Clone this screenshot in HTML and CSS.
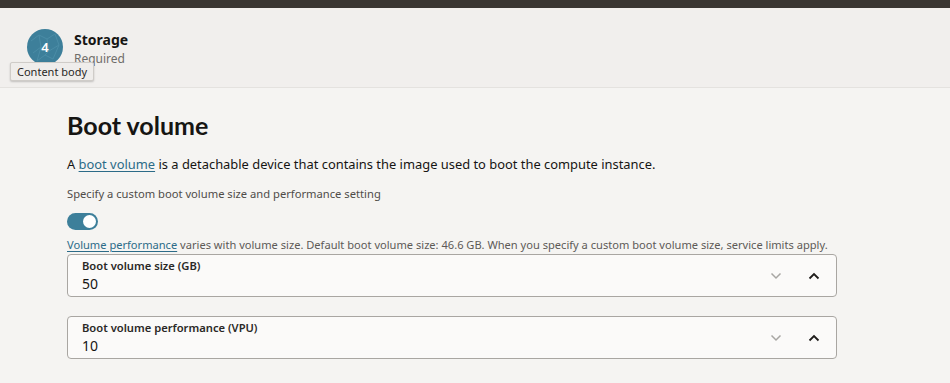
FILE: index.html
```html
<!DOCTYPE html>
<html>
<head>
<meta charset="utf-8">
<link rel="stylesheet" href="styles.css">
</head>
<body>
<div class="topbar"></div>
<header class="step">
  <div class="badge">
    <svg width="36" height="36" viewBox="0 0 36 36"><circle cx="18" cy="18" r="18" fill="#3d7f9a"/><path d="M4 12 L12 6 L20 10 L28 5 M6 24 L14 18 L22 22 L32 16 M10 32 L18 26 L26 30 M12 6 L14 18 L10 32 M20 10 L22 22 L18 26 M28 5 L32 16 L26 30" stroke="#4a8ca6" stroke-width="1" fill="none"/></svg>
    <span class="num">4</span>
  </div>
  <div class="step-text">
    <div class="step-title">Storage</div>
    <div class="step-sub">Required</div>
  </div>
  <div class="tooltip">Content body</div>
</header>
<main class="content">
  <h1>Boot volume</h1>
  <p class="lead">A <a href="#">boot volume</a> is a detachable device that contains the image used to boot the compute instance.</p>
  <div class="label">Specify a custom boot volume size and performance setting</div>
  <div class="switch"><span class="knob"></span></div>
  <div class="help"><a href="#">Volume performance</a> varies with volume size. Default boot volume size: 46.6 GB. When you specify a custom boot volume size, service limits apply.</div>
  <div class="field">
    <div class="field-main">
      <div class="field-label">Boot volume size (GB)</div>
      <div class="field-value">50</div>
    </div>
    <div class="steppers">
      <svg class="down" width="12" height="8" viewBox="0 0 12 8"><path d="M1.5 1.5 L6 6 L10.5 1.5" stroke="#a8a6a3" stroke-width="1.5" fill="none"/></svg>
      <svg class="up" width="12" height="8" viewBox="0 0 12 8"><path d="M1.5 6.5 L6 2 L10.5 6.5" stroke="#1f1d1b" stroke-width="1.8" fill="none"/></svg>
    </div>
  </div>
  <div class="field">
    <div class="field-main">
      <div class="field-label">Boot volume performance (VPU)</div>
      <div class="field-value">10</div>
    </div>
    <div class="steppers">
      <svg class="down" width="12" height="8" viewBox="0 0 12 8"><path d="M1.5 1.5 L6 6 L10.5 1.5" stroke="#a8a6a3" stroke-width="1.5" fill="none"/></svg>
      <svg class="up" width="12" height="8" viewBox="0 0 12 8"><path d="M1.5 6.5 L6 2 L10.5 6.5" stroke="#1f1d1b" stroke-width="1.8" fill="none"/></svg>
    </div>
  </div>
</main>
</body>
</html>
```
FILE: styles.css
```css
* { box-sizing: border-box; }
html, body { margin: 0; padding: 0; }
body {
  background: #f5f4f2;
  font-family: "Noto Sans", "Open Sans", sans-serif;
  color: #161513;
  width: 950px;
  height: 383px;
  overflow: hidden;
}
.topbar { height: 8px; background: #3a3632; }
.step {
  position: relative;
  height: 80px;
  background: #f1efed;
  border-bottom: 1px solid #e4e2df;
  display: flex;
  align-items: flex-start;
  padding: 21px 0 0 27px;
  gap: 11px;
}
.badge { position: relative; width: 36px; height: 36px; }
.badge svg { display: block; }
.badge .num {
  position: absolute; inset: 0;
  display: flex; align-items: center; justify-content: center;
  color: #fff; font-size: 13px; font-weight: 600;
}
.step-text { padding-top: 1px; }
.step-title { font-size: 14px; font-weight: 700; line-height: 20px; }
.step-sub { font-size: 12px; color: #6f6c69; line-height: 18px; }
.tooltip {
  position: absolute;
  left: 10px; top: 54px;
  padding: 0 6px;
  height: 19px;
  line-height: 17px;
  font-size: 11px;
  color: #2a2826;
  background: #efedeb;
  border: 1px solid #cfccc8;
  border-radius: 2px;
  box-shadow: 0 1px 2px rgba(0,0,0,0.2);
}
.content { padding: 22px 0 0 67px; width: 837px; }
h1 { margin: 0; font-family: Lato, "Noto Sans", sans-serif; font-size: 25px; font-weight: 700; line-height: 30px; }
.lead { margin: 14px 0 0; font-size: 12.9px; line-height: 20px; }
a { color: #2c6b88; text-decoration: underline; text-underline-offset: 2px; }
.label { margin-top: 11px; font-size: 11.2px; color: #4f4c49; line-height: 18px; }
.switch {
  margin-top: 10px;
  width: 31px; height: 17px;
  border-radius: 9px;
  background: #3d7f9a;
  position: relative;
}
.knob {
  position: absolute; right: 2px; top: 2px;
  width: 13px; height: 13px; border-radius: 50%;
  background: #fff;
}
.help { margin-top: 6px; font-size: 11.1px; color: #5d5a57; line-height: 18px; white-space: nowrap; }
.help a { color: #2c6b88; }
.field {
  margin-top: 0;
  height: 43px;
  background: #fbfaf9;
  border: 1px solid #a9a6a2;
  border-radius: 4px;
  display: flex;
  align-items: center;
  padding: 0 0 0 14px;
}
.field + .field { margin-top: 19px; }
.field-main { flex: 1; }
.field-label { font-size: 11.2px; font-weight: 600; color: #2a2826; line-height: 16px; }
.field-value { font-size: 14px; line-height: 20px; color: #161513; }
.steppers { display: flex; gap: 26px; padding-right: 16px; align-items: center; }
.steppers svg { display: block; }
```
